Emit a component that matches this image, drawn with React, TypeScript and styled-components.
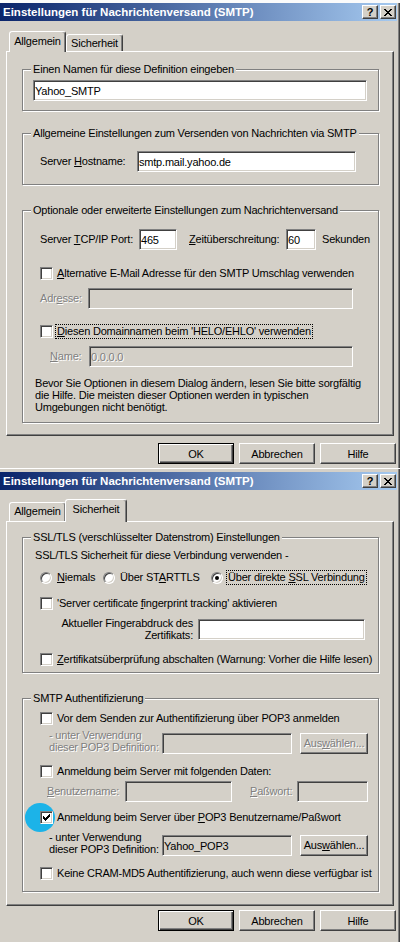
import React from 'react';
import styled, { createGlobalStyle, css } from 'styled-components';

const face = '#d4d0c8';
const shadow = '#808080';
const dark = '#404040';

const GlobalStyle = createGlobalStyle`
  html, body { margin: 0; padding: 0; background: ${face}; }
  body {
    font-family: "Liberation Sans", Arial, sans-serif;
    font-size: 11px;
    letter-spacing: -0.2px;
    color: #000;
  }
  #root { width: 400px; height: 942px; overflow: hidden; }
`;

const TopStrip = styled.div`
  height: 3px;
  background: #fbfbfb;
`;

const Window = styled.div<{ $height: number; $first?: boolean }>`
  box-sizing: border-box;
  height: ${p => p.$height}px;
  display: flex;
  flex-direction: column;
  background: ${face};
  padding: ${p => (p.$first ? '0' : '3px')} 3px 0 0;
  border-top: ${p => (p.$first ? 'none' : '1px solid #fff')};
  box-shadow: inset -1px 0 ${dark}, inset -2px 0 ${shadow};
`;

const TitleBar = styled.div`
  flex: none;
  height: 18px;
  display: flex;
  align-items: center;
  justify-content: space-between;
  padding: 0 1px 0 3px;
  background: linear-gradient(to right, #0a246a, #a6caf0);
`;

const Caption = styled.span`
  color: #fff;
  font-weight: bold;
  font-size: 11.5px;
  letter-spacing: 0;
  white-space: nowrap;
`;

const CaptionButtons = styled.div`
  display: flex;
  gap: 2px;
`;

const CaptionButton = styled.div`
  box-sizing: border-box;
  width: 16px;
  height: 14px;
  display: flex;
  align-items: center;
  justify-content: center;
  background: ${face};
  border: 1px solid;
  border-color: #fff ${dark} ${dark} #fff;
  box-shadow: inset -1px -1px ${shadow};
  font-weight: bold;
  font-size: 11px;
  line-height: 1;
`;

const Body = styled.div<{ $pt: number }>`
  flex: 1;
  display: flex;
  flex-direction: column;
  padding: ${p => p.$pt}px 0 0 6px;
`;

const TabRow = styled.div<{ $h: number }>`
  flex: none;
  height: ${p => p.$h}px;
  display: flex;
  align-items: flex-end;
  padding-left: 3px;
`;

const Tab = styled.div<{ $active?: boolean; $w: number; $ml?: number }>`
  box-sizing: border-box;
  flex: none;
  position: relative;
  z-index: ${p => (p.$active ? 1 : 0)};
  width: ${p => p.$w}px;
  height: ${p => (p.$active ? 'calc(100% + 1px)' : 'calc(100% - 3px)')};
  margin-bottom: ${p => (p.$active ? '-1px' : '0')};
  margin-left: ${p => p.$ml ?? 0}px;
  background: ${face};
  border: 1px solid;
  border-bottom: none;
  border-color: #fff ${dark} transparent #fff;
  border-radius: 3px 3px 0 0;
  box-shadow: inset -1px 0 ${shadow};
  padding-top: ${p => (p.$active ? 3 : 2)}px;
  text-align: center;
  line-height: 13px;
`;

const Panel = styled.div<{ $pt: number }>`
  box-sizing: border-box;
  flex: none;
  height: 385px;
  margin-right: 3px;
  display: flex;
  flex-direction: column;
  padding: ${p => p.$pt}px 14px 0 15px;
  border: 1px solid;
  border-color: #fff ${dark} ${dark} #fff;
  box-shadow: inset -1px -1px ${shadow};
`;

const Group = styled.fieldset<{ $mt?: number }>`
  margin: ${p => p.$mt ?? 0}px 0 0 0;
  padding: 0;
  min-width: 0;
  border: 1px solid ${shadow};
  box-shadow: inset 1px 1px #fff, 1px 1px #fff;
`;

const Legend = styled.legend`
  margin-left: 8px;
  padding: 0 2px;
  line-height: 13px;
  background: ${face};
  white-space: nowrap;
`;

const GroupBody = styled.div<{ $pt: number; $pb: number }>`
  display: flex;
  flex-direction: column;
  padding: ${p => p.$pt}px 0 ${p => p.$pb}px 0;
`;

const Row = styled.div<{ $mt?: number; $pl?: number; $top?: boolean }>`
  display: flex;
  align-items: ${p => (p.$top ? 'flex-start' : 'center')};
  margin-top: ${p => p.$mt ?? 0}px;
  padding-left: ${p => p.$pl ?? 17}px;
  line-height: 13px;
  white-space: nowrap;
`;

const Label = styled.span<{ $w?: number; $ml?: number; $disabled?: boolean; $right?: boolean; $lh?: number }>`
  flex: none;
  width: ${p => (p.$w ? `${p.$w}px` : 'auto')};
  margin-left: ${p => p.$ml ?? 0}px;
  color: ${p => (p.$disabled ? shadow : '#000')};
  text-shadow: ${p => (p.$disabled ? '1px 1px #fff' : 'none')};
  text-align: ${p => (p.$right ? 'right' : 'left')};
  line-height: ${p => p.$lh ?? 13}px;
`;

const Field = styled.input<{ $w: number; $mt?: number; $ml?: number; $gray?: boolean; $disabled?: boolean }>`
  box-sizing: border-box;
  flex: none;
  width: ${p => p.$w}px;
  height: 21px;
  margin: ${p => p.$mt ?? 0}px 0 0 ${p => p.$ml ?? 0}px;
  padding: 0 1px;
  font: inherit;
  letter-spacing: inherit;
  border: 1px solid;
  border-color: ${shadow} #fff #fff ${shadow};
  box-shadow: inset 1px 1px ${dark}, inset -1px -1px ${face};
  background: ${p => (p.$gray ? face : '#fff')};
  color: ${p => (p.$disabled ? shadow : '#000')};
  text-shadow: ${p => (p.$disabled ? '1px 1px #fff' : 'none')};
  outline: none;
`;

const CheckBox = styled.span`
  flex: none;
  box-sizing: border-box;
  width: 13px;
  height: 13px;
  display: flex;
  align-items: center;
  justify-content: center;
  border: 1px solid;
  border-color: ${shadow} #fff #fff ${shadow};
  box-shadow: inset 1px 1px ${dark}, inset -1px -1px ${face};
  background: #fff;
  margin-right: 4px;
`;

const Marker = styled.span`
  position: relative;
  display: flex;
  flex: none;
  &::before {
    content: '';
    position: absolute;
    left: -15px;
    top: -8px;
    width: 30px;
    height: 29px;
    border-radius: 50%;
    background: #1cb3e8;
  }
  > span {
    position: relative;
  }
`;

const RadioItem = styled.span<{ $w?: number }>`
  display: flex;
  align-items: center;
  flex: none;
  width: ${p => (p.$w ? `${p.$w}px` : 'auto')};
`;

const Radio = styled.span`
  flex: none;
  box-sizing: border-box;
  width: 12px;
  height: 12px;
  border-radius: 50%;
  display: flex;
  align-items: center;
  justify-content: center;
  border: 1px solid;
  border-color: ${shadow} #fff #fff ${shadow};
  box-shadow: inset 1px 1px ${dark}, inset -1px -1px ${face};
  background: #fff;
  margin-right: 5px;
`;

const RadioDot = styled.span`
  width: 4px;
  height: 4px;
  border-radius: 50%;
  background: #000;
`;

const Focus = styled.span`
  outline: 1px dotted #000;
  padding: 0 1px;
  margin-left: -1px;
`;

const Paragraph = styled.div`
  margin-top: 10px;
  padding-left: 12px;
  line-height: 12px;
  white-space: nowrap;
`;

const Button = styled.div<{ $w: number; $mt?: number; $ml?: number; $default?: boolean; $disabled?: boolean }>`
  flex: none;
  box-sizing: border-box;
  width: ${p => p.$w}px;
  height: 21px;
  margin: ${p => p.$mt ?? 0}px 0 0 ${p => p.$ml ?? 0}px;
  display: flex;
  align-items: center;
  justify-content: center;
  background: ${face};
  color: ${p => (p.$disabled ? shadow : '#000')};
  text-shadow: ${p => (p.$disabled ? '1px 1px #fff' : 'none')};
  ${p =>
    p.$default
      ? css`
          border: 1px solid #000;
          box-shadow: inset 1px 1px #fff, inset -1px -1px ${dark}, inset -2px -2px ${shadow};
        `
      : css`
          border: 1px solid;
          border-color: #fff ${dark} ${dark} #fff;
          box-shadow: inset -1px -1px ${shadow};
        `}
`;

const ButtonRow = styled.div<{ $mt: number }>`
  display: flex;
  justify-content: flex-end;
  gap: 5px;
  margin-top: ${p => p.$mt}px;
  padding-right: 1px;
`;

const Check = ({ on = false }) => (
  <CheckBox>
    {on && (
      <svg width="7" height="7" viewBox="0 0 7 7" shapeRendering="crispEdges">
        <path d="M6 0h1v1h-1z M5 1h2v1h-2z M0 2h1v1h-1z M4 2h3v1h-3z M0 3h2v1h-2z M3 3h3v1h-3z M0 4h5v1h-5z M1 5h3v1h-3z M2 6h1v1h-1z" fill="#000" />
      </svg>
    )}
  </CheckBox>
);

const TitleBarView = () => (
  <TitleBar>
    <Caption>Einstellungen für Nachrichtenversand (SMTP)</Caption>
    <CaptionButtons>
      <CaptionButton>?</CaptionButton>
      <CaptionButton>
        <svg width="8" height="7" viewBox="0 0 8 7" shapeRendering="crispEdges">
          <path d="M0 0h2v1h-2z M6 0h2v1h-2z M1 1h2v1h-2z M5 1h2v1h-2z M2 2h4v1h-4z M3 3h2v1h-2z M2 4h4v1h-4z M1 5h2v1h-2z M5 5h2v1h-2z M0 6h2v1h-2z M6 6h2v1h-2z" fill="#000" />
        </svg>
      </CaptionButton>
    </CaptionButtons>
  </TitleBar>
);

const DialogButtons = ({ mt }: { mt: number }) => (
  <ButtonRow $mt={mt}>
    <Button $w={76} $default>OK</Button>
    <Button $w={76}>Abbrechen</Button>
    <Button $w={76}>Hilfe</Button>
  </ButtonRow>
);

const GeneralTab = () => (
  <Panel $pt={11}>
    <Group>
      <Legend>Einen Namen für diese Definition eingeben</Legend>
      <GroupBody $pt={4} $pb={9}>
        <Row $pl={10}>
          <Field $w={334} defaultValue="Yahoo_SMTP" readOnly />
        </Row>
      </GroupBody>
    </Group>

    <Group $mt={16}>
      <Legend>Allgemeine Einstellungen zum Versenden von Nachrichten via SMTP</Legend>
      <GroupBody $pt={11} $pb={12}>
        <Row>
          <Label $w={97}>Server <u>H</u>ostname:</Label>
          <Field $w={219} defaultValue="smtp.mail.yahoo.de" readOnly />
        </Row>
      </GroupBody>
    </Group>

    <Group $mt={19}>
      <Legend>Optionale oder erweiterte Einstellungen zum Nachrichtenversand</Legend>
      <GroupBody $pt={12} $pb={9}>
        <Row>
          <Label $w={99}>Server <u>T</u>CP/IP Port:</Label>
          <Field $w={38} defaultValue="465" readOnly />
          <Label $ml={12} $w={97}><u>Z</u>eitüberschreitung:</Label>
          <Field $w={30} defaultValue="60" readOnly />
          <Label $ml={6}>Sekunden</Label>
        </Row>
        <Row $mt={17}>
          <Check />
          <Label><u>A</u>lternative E-Mail Adresse für den SMTP Umschlag verwenden</Label>
        </Row>
        <Row $mt={8}>
          <Label $w={48} $disabled>Adr<u>e</u>sse:</Label>
          <Field $w={265} $gray readOnly />
        </Row>
        <Row $mt={16}>
          <Check />
          <Focus><u>D</u>iesen Domainnamen beim 'HELO/EHLO' verwenden</Focus>
        </Row>
        <Row $mt={8} $pl={27}>
          <Label $w={39} $disabled><u>N</u>ame:</Label>
          <Field $w={264} $gray $disabled defaultValue="0.0.0.0" readOnly />
        </Row>
        <Paragraph>
          Bevor Sie Optionen in diesem Dialog ändern, lesen Sie bitte sorgfältig
          <br />
          die Hilfe. Die meisten dieser Optionen werden in typischen
          <br />
          Umgebungen nicht benötigt.
        </Paragraph>
      </GroupBody>
    </Group>
  </Panel>
);

const SecurityTab = () => (
  <Panel $pt={9}>
    <Group>
      <Legend>SSL/TLS (verschlüsselter Datenstrom) Einstellungen</Legend>
      <GroupBody $pt={5} $pb={6}>
        <Row $pl={12}>
          <Label>SSL/TLS Sicherheit für diese Verbindung verwenden -</Label>
        </Row>
        <Row $mt={9}>
          <RadioItem $w={63}>
            <Radio />
            <Label><u>N</u>iemals</Label>
          </RadioItem>
          <RadioItem $w={108}>
            <Radio />
            <Label>Über ST<u>A</u>RTTLS</Label>
          </RadioItem>
          <RadioItem>
            <Radio><RadioDot /></Radio>
            <Focus>Über direkte <u>S</u>SL Verbindung</Focus>
          </RadioItem>
        </Row>
        <Row $mt={13}>
          <Check />
          <Label>'Server certificate <u>f</u>ingerprint tracking' aktivieren</Label>
        </Row>
        <Row $mt={7} $top>
          <Label $w={153} $right $lh={12}>
            Aktueller Fingerabdruck des
            <br />
            Zertifikats:
          </Label>
          <Field $w={167} $mt={2} $ml={5} readOnly />
        </Row>
        <Row $mt={12}>
          <Check />
          <Label><u>Z</u>ertifikatsüberprüfung abschalten (Warnung: Vorher die Hilfe lesen)</Label>
        </Row>
      </GroupBody>
    </Group>

    <Group $mt={19}>
      <Legend>SMTP Authentifizierung</Legend>
      <GroupBody $pt={7} $pb={11}>
        <Row>
          <Check />
          <Label>Vor dem Senden zur Authentifizierung über POP3 anmelden</Label>
        </Row>
        <Row $mt={4} $pl={26} $top>
          <Label $w={113} $lh={12} $disabled>
            - unter Verwendung
            <br />
            dieser POP3 Definition:
          </Label>
          <Field $w={130} $mt={4} $gray readOnly />
          <Button $w={68} $mt={4} $ml={8} $disabled>Aus<u>w</u>ählen...</Button>
        </Row>
        <Row $mt={11}>
          <Check />
          <Label>Anmeldung beim Server mit folgenden Daten:</Label>
        </Row>
        <Row $mt={3} $pl={24}>
          <Label $w={78} $disabled><u>B</u>enutzername:</Label>
          <Field $w={107} $gray readOnly />
          <Label $w={47} $ml={18} $disabled><u>P</u>aßwort:</Label>
          <Field $w={71} $gray readOnly />
        </Row>
        <Row $mt={9}>
          <Marker>
            <Check on />
          </Marker>
          <Label>Anmeldung beim Server über <u>P</u>OP3 Benutzername/Paßwort</Label>
        </Row>
        <Row $mt={7} $pl={26} $top>
          <Label $w={113} $lh={12}>
            - unter Verwendung
            <br />
            dieser POP3 Definition:
          </Label>
          <Field $w={130} $mt={4} $gray defaultValue="Yahoo_POP3" readOnly />
          <Button $w={68} $mt={4} $ml={8}>Aus<u>w</u>ählen...</Button>
        </Row>
        <Row $mt={11}>
          <Check />
          <Label>Keine CRAM-MD5 Authentifizierung, auch wenn diese verfügbar ist</Label>
        </Row>
      </GroupBody>
    </Group>
  </Panel>
);

export default function App() {
  return (
    <>
      <GlobalStyle />
      <TopStrip />
      <Window $height={465} $first>
        <TitleBarView />
        <Body $pt={10}>
          <TabRow $h={20}>
            <Tab $active $w={57}>Allgemein</Tab>
            <Tab $w={57}>Sicherheit</Tab>
          </TabRow>
          <GeneralTab />
          <DialogButtons mt={7} />
        </Body>
      </Window>
      <Window $height={474}>
        <TitleBarView />
        <Body $pt={9}>
          <TabRow $h={22}>
            <Tab $w={57}>Allgemein</Tab>
            <Tab $active $w={62} $ml={-1}>Sicherheit</Tab>
          </TabRow>
          <SecurityTab />
          <DialogButtons mt={4} />
        </Body>
      </Window>
    </>
  );
}
